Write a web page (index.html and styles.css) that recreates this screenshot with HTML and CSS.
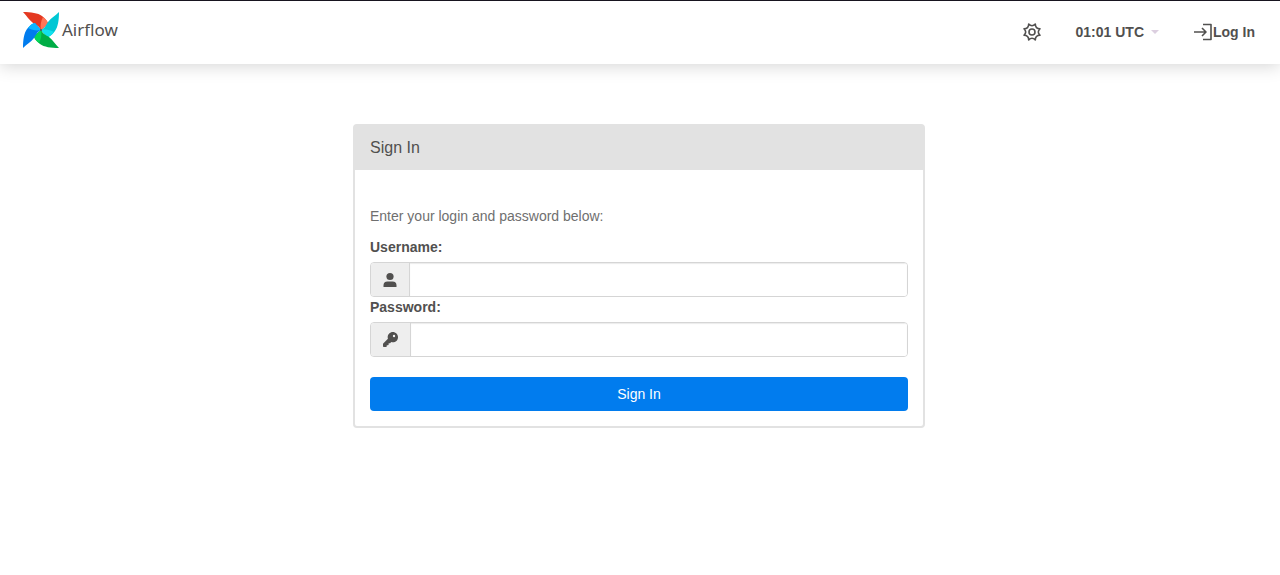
FILE: index.html
```
<!DOCTYPE html>
<html lang="en">
<head>
  <meta charset="UTF-8">
  <meta name="viewport" content="width=device-width, initial-scale=1">
  <title>Sign In - Airflow</title>
  <link rel="stylesheet" href="styles.css">
</head>
<body>
  <header class="navbar">
    <a class="brand" href="#">
      <svg class="brand-logo" viewBox="0 0 38 38" aria-hidden="true">
        <path fill="#e43921" d="M1 1C9 1 16 2 20 5C24 8 26 11 26 13L19 19C17 15 14 14 11 12C7 9 5 5 1 1Z"/>
        <path fill="#ff7557" d="M21 6C24 8 26 11 26 13L19 19C18 14 19 10 21 6Z"/>
        <path fill="#00c7d4" d="M37 1C37 9 36 16 33 20C30 24 27 26 25 26L19 19C23 17 24 14 26 11C29 7 33 5 37 1Z"/>
        <path fill="#11e1ee" d="M32 21C30 24 27 26 25 26L19 19C24 18 28 19 32 21Z"/>
        <path fill="#00ad46" d="M37 37C29 37 22 36 18 33C14 30 12 27 12 25L19 19C21 23 24 24 27 26C31 29 33 33 37 37Z"/>
        <path fill="#04d659" d="M17 32C14 30 12 27 12 25L19 19C20 24 19 28 17 32Z"/>
        <path fill="#017cee" d="M1 37C1 29 2 22 5 18C8 14 11 12 13 12L19 19C15 21 14 24 12 27C9 31 5 33 1 37Z"/>
        <path fill="#0cb6ff" d="M6 17C8 14 11 12 13 12L19 19C14 20 10 19 6 17Z"/>
        <circle cx="19" cy="19" r="1" fill="#51504f"/>
      </svg>
      <span>Airflow</span>
    </a>
    <nav class="nav-links">
      <button class="nav-item" type="button" aria-label="Settings">
        <svg class="gear" viewBox="0 0 20 20" aria-hidden="true">
          <path d="M6.700 2Q10 5.400 13.300 2Q13.300 6.700 18 6.700Q14.600 10 18 13.300Q13.300 13.300 13.300 18Q10 14.600 6.700 18Q6.700 13.300 2 13.300Q5.400 10 2 6.700Q6.700 6.700 6.700 2Z"/>
          <circle cx="10" cy="10" r="3"/>
        </svg>
      </button>
      <button class="nav-item" type="button">01:01 UTC<span class="caret"></span></button>
      <a class="nav-item" href="#">
        <svg class="login-icon" viewBox="0 0 20 20" aria-hidden="true">
          <path d="M1 10H13M9 6L13 10L9 14M10 2.500H18V17.500H10"/>
        </svg>Log In
      </a>
    </nav>
  </header>

  <main class="container">
    <section class="panel">
      <h1 class="panel-heading">Sign In</h1>
      <form class="panel-body">
        <p class="help">Enter your login and password below:</p>
        <label for="username">Username:</label>
        <div class="input-group">
          <span class="addon">
            <svg class="icon-user" viewBox="0 0 14 16" aria-hidden="true">
              <circle cx="7" cy="4.5" r="3.6"/>
              <path d="M0.5 15V13.5Q0.5 9.5 4.5 9.5H9.5Q13.5 9.5 13.5 13.5V15Z"/>
            </svg>
          </span>
          <input type="text" id="username" name="username">
        </div>
        <label for="password">Password:</label>
        <div class="input-group">
          <span class="addon">
            <svg class="icon-key" viewBox="0 0 512 512" aria-hidden="true">
              <path d="M336 352c97.200 0 176-78.800 176-176S433.200 0 336 0S160 78.800 160 176c0 18.700 2.900 36.800 8.300 53.700L7 391c-4.500 4.500-7 10.600-7 17v80c0 13.300 10.700 24 24 24h80c13.300 0 24-10.700 24-24v-40h40c13.300 0 24-10.700 24-24v-40h40c6.400 0 12.500-2.500 17-7l33.300-33.300c16.900 5.400 35 8.300 53.700 8.300zM376 96a40 40 0 1 1 0 80 40 40 0 1 1 0-80z"/>
            </svg>
          </span>
          <input type="password" id="password" name="password">
        </div>
        <button class="btn-primary" type="submit">Sign In</button>
      </form>
    </section>
  </main>
</body>
</html>
```
FILE: styles.css
```
* {
  box-sizing: border-box;
}
body {
  margin: 0;
  font-family: "Liberation Sans", Arial, sans-serif;
  font-size: 14px;
  line-height: 20px;
  color: #51504f;
  background: #fff;
}
.navbar {
  display: flex;
  justify-content: space-between;
  align-items: center;
  height: 64px;
  padding: 0 25px 0 22px;
  border-top: 1px solid #17141f;
  background: #fff;
  box-shadow: 0 2px 16px rgba(0, 0, 0, 0.17);
}
.brand {
  display: flex;
  align-items: center;
  gap: 2px;
  padding-bottom: 5px;
  font-family: "Noto Sans", sans-serif;
  font-size: 17px;
  color: #51504f;
  text-decoration: none;
}
.brand-logo {
  width: 38px;
  height: 38px;
}
.nav-links {
  display: flex;
  align-items: center;
  gap: 34px;
  padding-bottom: 2px;
}
.nav-item {
  display: flex;
  align-items: center;
  padding: 0;
  border: 0;
  background: none;
  font: inherit;
  font-weight: bold;
  color: #51504f;
  text-decoration: none;
  cursor: pointer;
}
.gear,
.login-icon {
  width: 20px;
  height: 20px;
  fill: none;
  stroke: #51504f;
  stroke-width: 1.6;
  stroke-linejoin: round;
}
.caret {
  margin-left: 7px;
  border-top: 4px solid #dccfe0;
  border-left: 4px solid transparent;
  border-right: 4px solid transparent;
}
.container {
  padding: 60px 18px 60px 16px;
}
.panel {
  max-width: 572px;
  margin: 0 auto;
  border: 2px solid #e2e2e2;
  border-radius: 4px;
  background: #fff;
}
.panel-heading {
  margin: 0;
  padding: 12px 15px;
  background: #e2e2e2;
  font-size: 16px;
  font-weight: normal;
}
.panel-body {
  padding: 36px 15px 15px;
}
.help {
  margin: 0 0 11px;
  color: #6f6f6f;
}
label {
  display: block;
  margin-bottom: 5px;
  font-weight: bold;
}
.input-group {
  display: flex;
  height: 35px;
  border: 1px solid #d5d5d5;
  border-radius: 4px;
  overflow: hidden;
}
.addon {
  display: flex;
  align-items: center;
  padding: 0 12px;
  border-right: 1px solid #d5d5d5;
  background: #eee;
}
.addon svg {
  fill: #51504f;
}
.icon-user {
  width: 14px;
  height: 16px;
}
.icon-key {
  width: 15px;
  height: 15px;
}
.input-group input {
  flex: 1;
  min-width: 0;
  padding: 6px 12px;
  border: 0;
  font: inherit;
  color: #51504f;
  box-shadow: inset 0 1px 1px rgba(0, 0, 0, 0.08);
}
.btn-primary {
  display: block;
  width: 100%;
  height: 34px;
  margin-top: 20px;
  border: 0;
  border-radius: 4px;
  background: #017cee;
  font: inherit;
  color: #fff;
  cursor: pointer;
}
```
